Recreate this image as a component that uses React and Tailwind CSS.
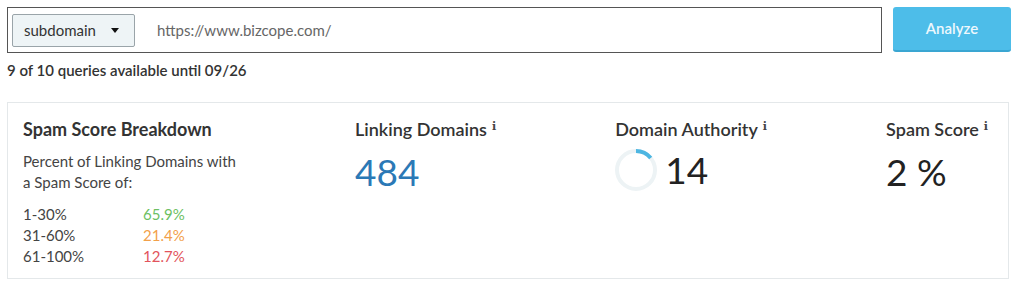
export default function App() {
  const rows = [
    { range: "1-30%", value: "65.9%", color: "text-[#6cbf63]" },
    { range: "31-60%", value: "21.4%", color: "text-[#f2a04a]" },
    { range: "61-100%", value: "12.7%", color: "text-[#e2545c]" },
  ];

  const Info = () => (
    <sup className="relative -top-[6px] ml-[5px] font-['DejaVu_Serif',serif] text-[11px] text-[#444]">
      i
    </sup>
  );

  return (
    <main className="min-h-[288px] bg-white font-['Lato',sans-serif] text-[#333]">
      <div className="flex items-start pl-[7px] pr-[13px] pt-[7px]">
        <div className="flex h-[46px] flex-1 items-center border border-[#555] pl-[4px]">
          <div className="flex h-[33px] w-[123px] items-center justify-between rounded-[2px] border border-[#9aa4a9] bg-[#eef4f6] pl-[11px] pr-[15px] text-[15px] text-[#333]">
            <span>subdomain</span>
            <span className="h-0 w-0 border-x-[4px] border-t-[5px] border-x-transparent border-t-[#111]" />
          </div>
          <span className="ml-[22px] text-[15px] text-[#666]">https://www.bizcope.com/</span>
        </div>
        <button className="ml-[11px] h-[45px] w-[118px] rounded-[3px] border-b-2 border-[#3aa6d2] bg-[#4dbde9] text-[15px] font-semibold text-[#eef8fd]">
          Analyze
        </button>
      </div>

      <p className="mt-[8px] pl-[7px] text-[15px] font-semibold leading-[18px] text-[#333]">
        9 of 10 queries available until 09/26
      </p>

      <section className="mx-[7px] mr-[15px] mt-[23px] flex justify-between border border-[#e4e8ea] pb-[11px] pl-[15px] pr-[20px] pt-[14px]">
        <div>
          <h2 className="text-[18px] font-bold leading-[24px] text-[#333]">Spam Score Breakdown</h2>
          <p className="mt-[10px] text-[15px] leading-[21px] text-[#444]">
            Percent of Linking Domains with
            <br />
            a Spam Score of:
          </p>
          <div className="mt-[11px] text-[15px] leading-[21px]">
            {rows.map((row) => (
              <div key={row.range} className="flex">
                <span className="w-[120px] text-[#444]">{row.range}</span>
                <span className={row.color}>{row.value}</span>
              </div>
            ))}
          </div>
        </div>

        <div>
          <h2 className="text-[18px] font-semibold leading-[24px] text-[#333]">
            Linking Domains
            <Info />
          </h2>
          <div className="mt-[11px] text-[37px] leading-[40px] text-[#2b79b6]">484</div>
        </div>

        <div>
          <h2 className="text-[18px] font-semibold leading-[24px] text-[#333]">
            Domain Authority
            <Info />
          </h2>
          <div className="mt-[8px] flex items-center">
            <svg width="42" height="42" viewBox="0 0 42 42" className="-rotate-90">
              <circle cx="21" cy="21" r="19" fill="none" stroke="#edf3f5" strokeWidth="4" />
              <circle
                cx="21"
                cy="21"
                r="19"
                fill="none"
                stroke="#4db6e2"
                strokeWidth="4"
                strokeDasharray="16.7 120"
              />
            </svg>
            <span className="ml-[8px] text-[37px] leading-[40px] text-[#222]">14</span>
          </div>
        </div>

        <div>
          <h2 className="text-[18px] font-semibold leading-[24px] text-[#333]">
            Spam Score
            <Info />
          </h2>
          <div className="mt-[11px] text-[37px] leading-[40px] text-[#222]">2 %</div>
        </div>
      </section>
    </main>
  );
}
